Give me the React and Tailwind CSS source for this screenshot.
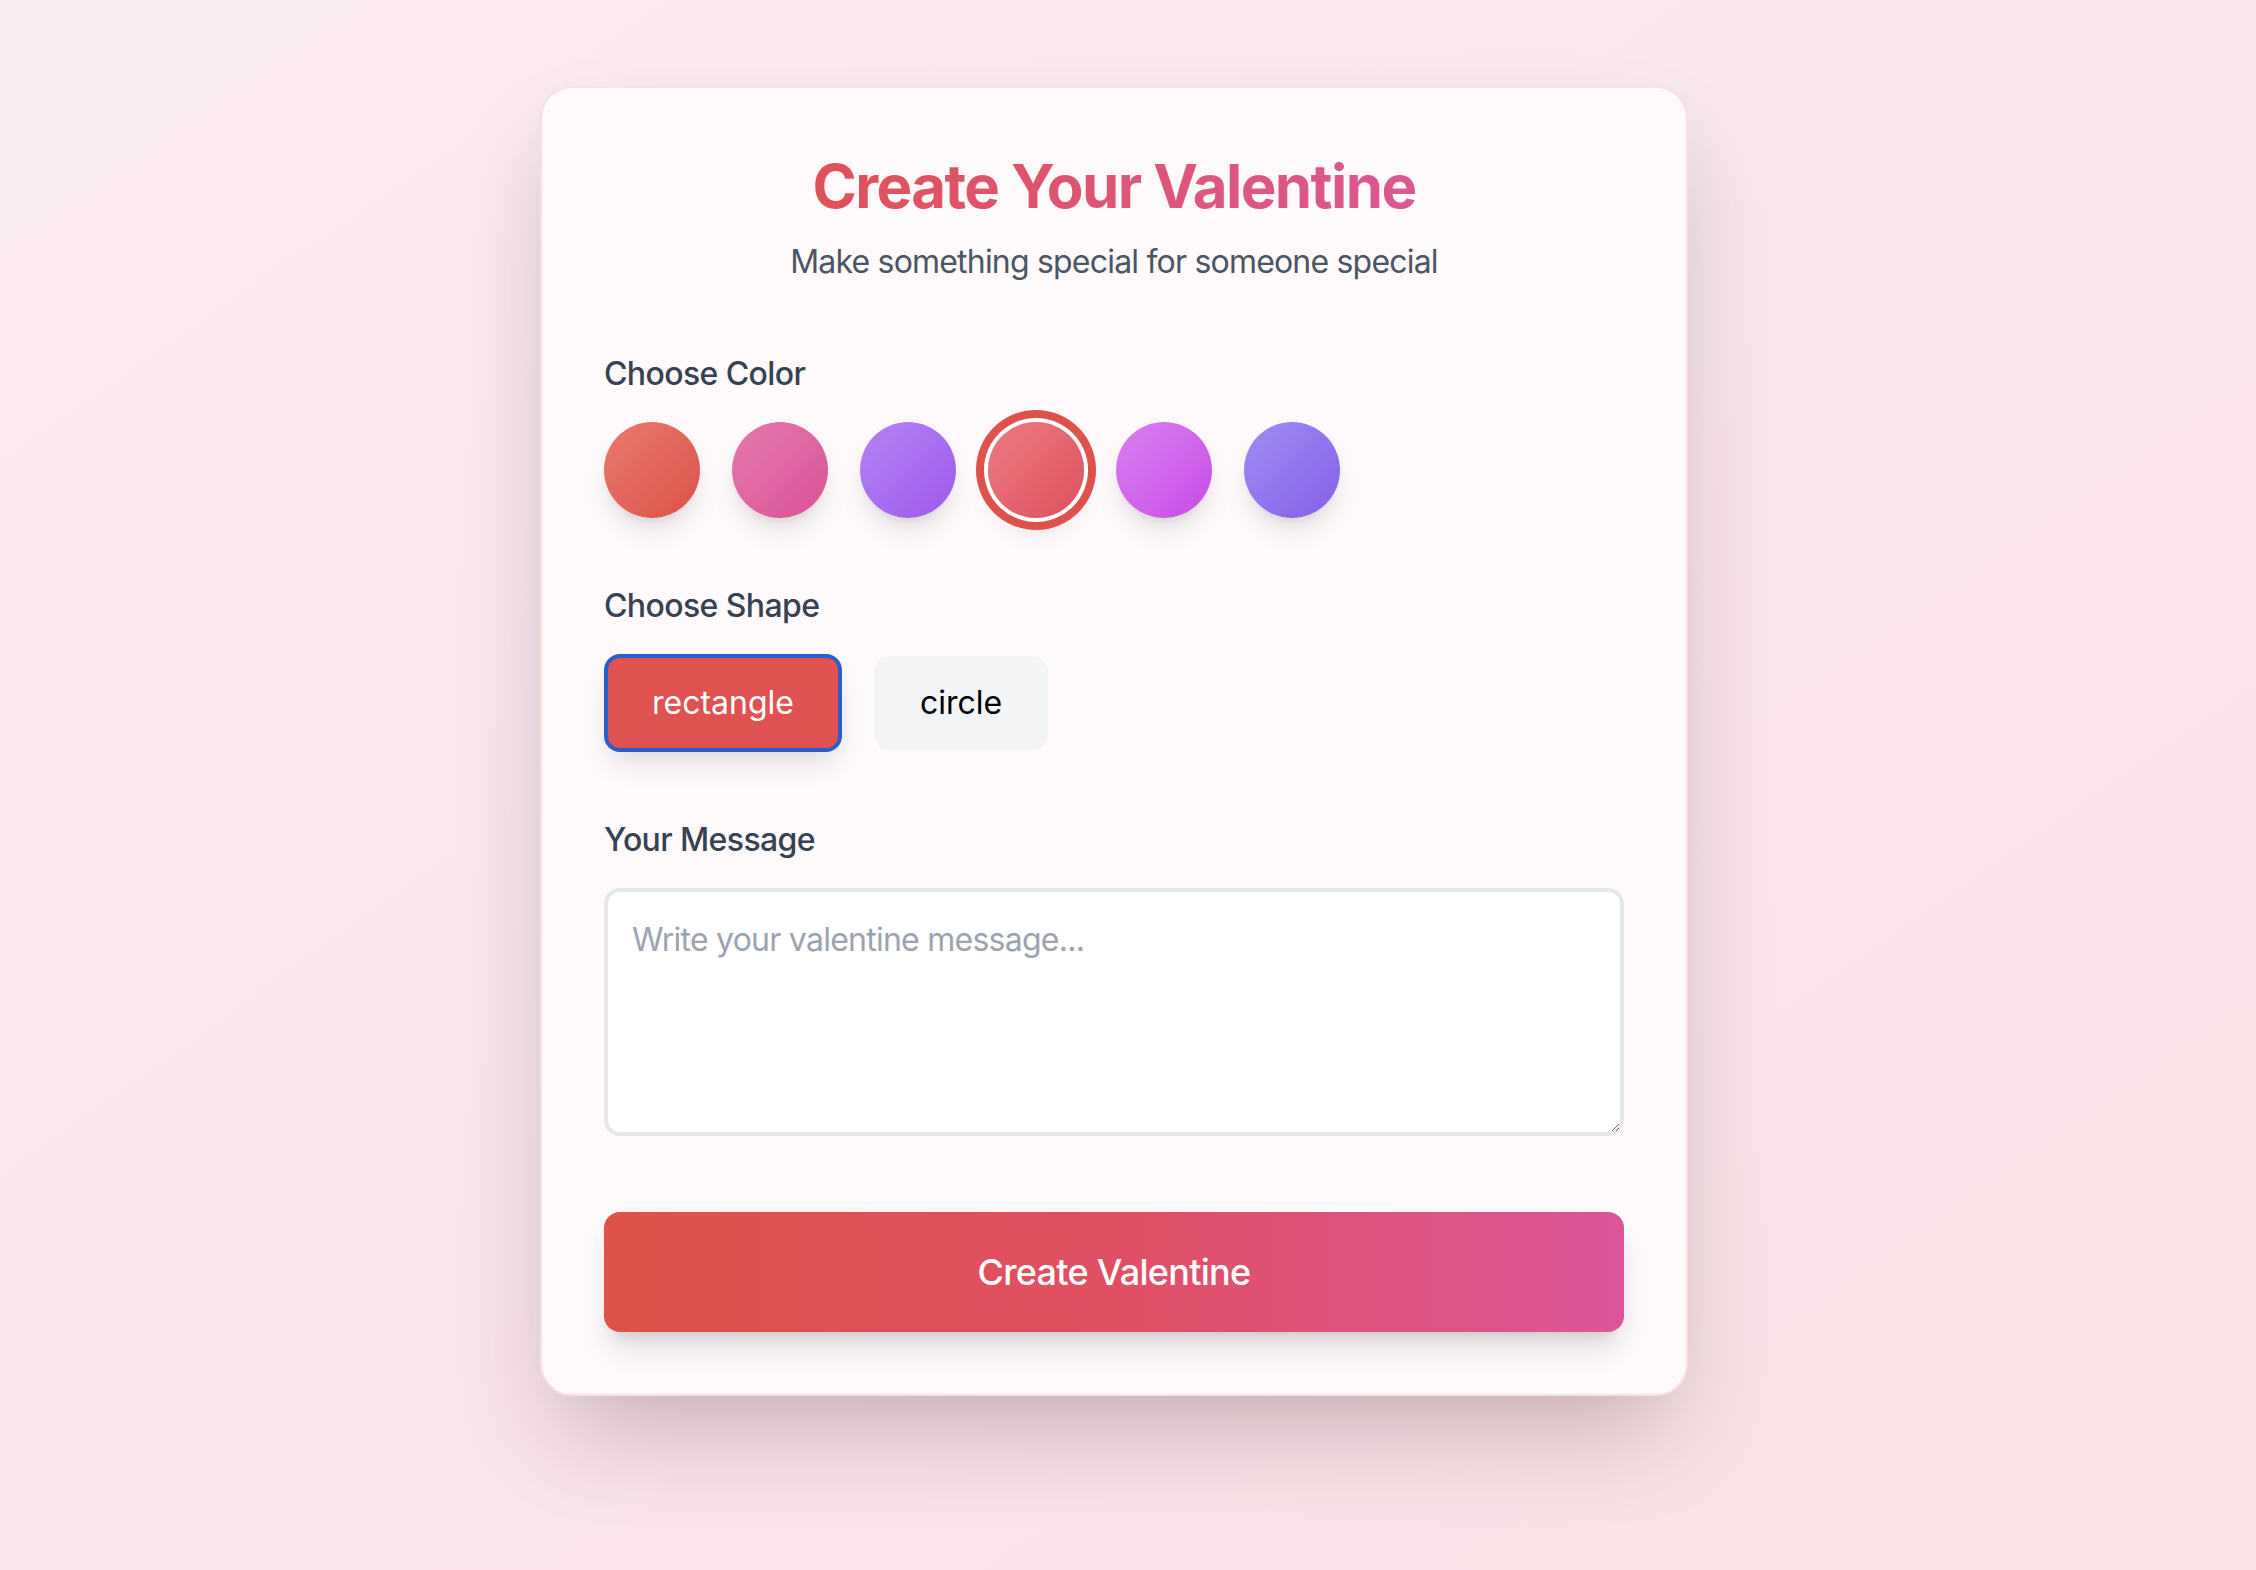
import React, { useState } from 'react'

const COLORS = [
  { id: 'red', cls: 'from-[#e8796f] to-[#dc5248]' },
  { id: 'pink', cls: 'from-[#e578ae] to-[#d95295]' },
  { id: 'purple', cls: 'from-[#b483f4] to-[#9d58ec]' },
  { id: 'rose', cls: 'from-[#ea7a82] to-[#df4f5e]' },
  { id: 'fuchsia', cls: 'from-[#da7ff1] to-[#c64ae5]' },
  { id: 'violet', cls: 'from-[#a08bf2] to-[#865fe9]' },
]

const SHAPES = ['rectangle', 'circle']

export default function App() {
  const [color, setColor] = useState('rose')
  const [shape, setShape] = useState('rectangle')
  const [message, setMessage] = useState('')

  return (
    <div className="min-h-screen bg-linear-to-br from-[#faeaf2] via-[#f8e5ec] to-[#f7e2e4] flex justify-center pt-[86px] pr-[28px] pb-[100px] font-['Inter','Noto_Sans',sans-serif]">
      <div className="w-[1148px] h-fit rounded-[32px] border-2 border-[#f8e0e3] bg-[#fefafb] p-[62px] shadow-[0_50px_100px_-24px_rgba(60,20,30,0.28)]">
        {/* Header */}
        <div className="text-center">
          <h1 className="text-[60px] leading-[72px] font-bold tracking-[-1.6px]">
            <span className="bg-linear-to-r from-[#e05157] to-[#db5892] bg-clip-text text-transparent">
              Create Your Valentine
            </span>
          </h1>
          <p className="mt-[16px] text-[32px] leading-[48px] text-[#4b5563] tracking-[-0.8px]">
            Make something special for someone special
          </p>
        </div>

        {/* Color */}
        <div className="mt-[64px]">
          <label className="block mb-[24px] text-[32px] leading-[48px] font-medium text-[#374151] tracking-[-0.6px]">Choose Color</label>
          <div className="flex gap-[32px]">
            {COLORS.map(c => (
              <button
                key={c.id}
                onClick={() => setColor(c.id)}
                className={`w-[96px] h-[96px] rounded-full bg-linear-to-br ${c.cls} shadow-[0_16px_28px_-6px_rgba(0,0,0,0.13),0_6px_10px_-6px_rgba(0,0,0,0.1)] ${
                  color === c.id ? 'ring-[8px] ring-[#df524c] ring-offset-[4px] ring-offset-white' : ''
                }`}
              />
            ))}
          </div>
        </div>

        {/* Shape */}
        <div className="mt-[64px]">
          <label className="block mb-[24px] text-[32px] leading-[48px] font-medium text-[#374151] tracking-[-0.6px]">Choose Shape</label>
          <div className="flex gap-[32px]">
            {SHAPES.map(s => (
              <button
                key={s}
                onClick={() => setShape(s)}
                className={
                  shape === s
                    ? 'h-[98px] px-[44px] rounded-[16px] border-[4px] border-[#2b5ec8] bg-[#df524f] text-white text-[32px] leading-[48px] shadow-[0_16px_28px_-6px_rgba(0,0,0,0.13)]'
                    : 'h-[94px] mt-[2px] px-[46px] rounded-[16px] bg-[#f3f4f6] text-black text-[32px] leading-[48px]'
                }
              >
                {s}
              </button>
            ))}
          </div>
        </div>

        {/* Message */}
        <div className="mt-[64px]">
          <label className="block mb-[24px] text-[32px] leading-[48px] font-medium text-[#374151] tracking-[-0.6px]">Your Message</label>
          <textarea
            rows={4}
            value={message}
            onChange={e => setMessage(e.target.value)}
            placeholder="Write your valentine message..."
            className="block w-full rounded-[16px] border-[4px] border-[#e5e7eb] bg-white p-[24px] text-[32px] leading-[48px] tracking-[-0.75px] text-[#111827] placeholder:text-[#9ca3af] outline-none"
          />
        </div>

        <button className="mt-[76px] w-full h-[120px] rounded-[16px] bg-linear-to-r from-[#de5249] via-[#e04f63] to-[#db5598] text-white text-[36px] leading-[56px] font-medium tracking-[-0.7px] shadow-[0_20px_30px_-6px_rgba(0,0,0,0.15),0_8px_12px_-8px_rgba(0,0,0,0.1)]">
          Create Valentine
        </button>
      </div>
    </div>
  )
}
